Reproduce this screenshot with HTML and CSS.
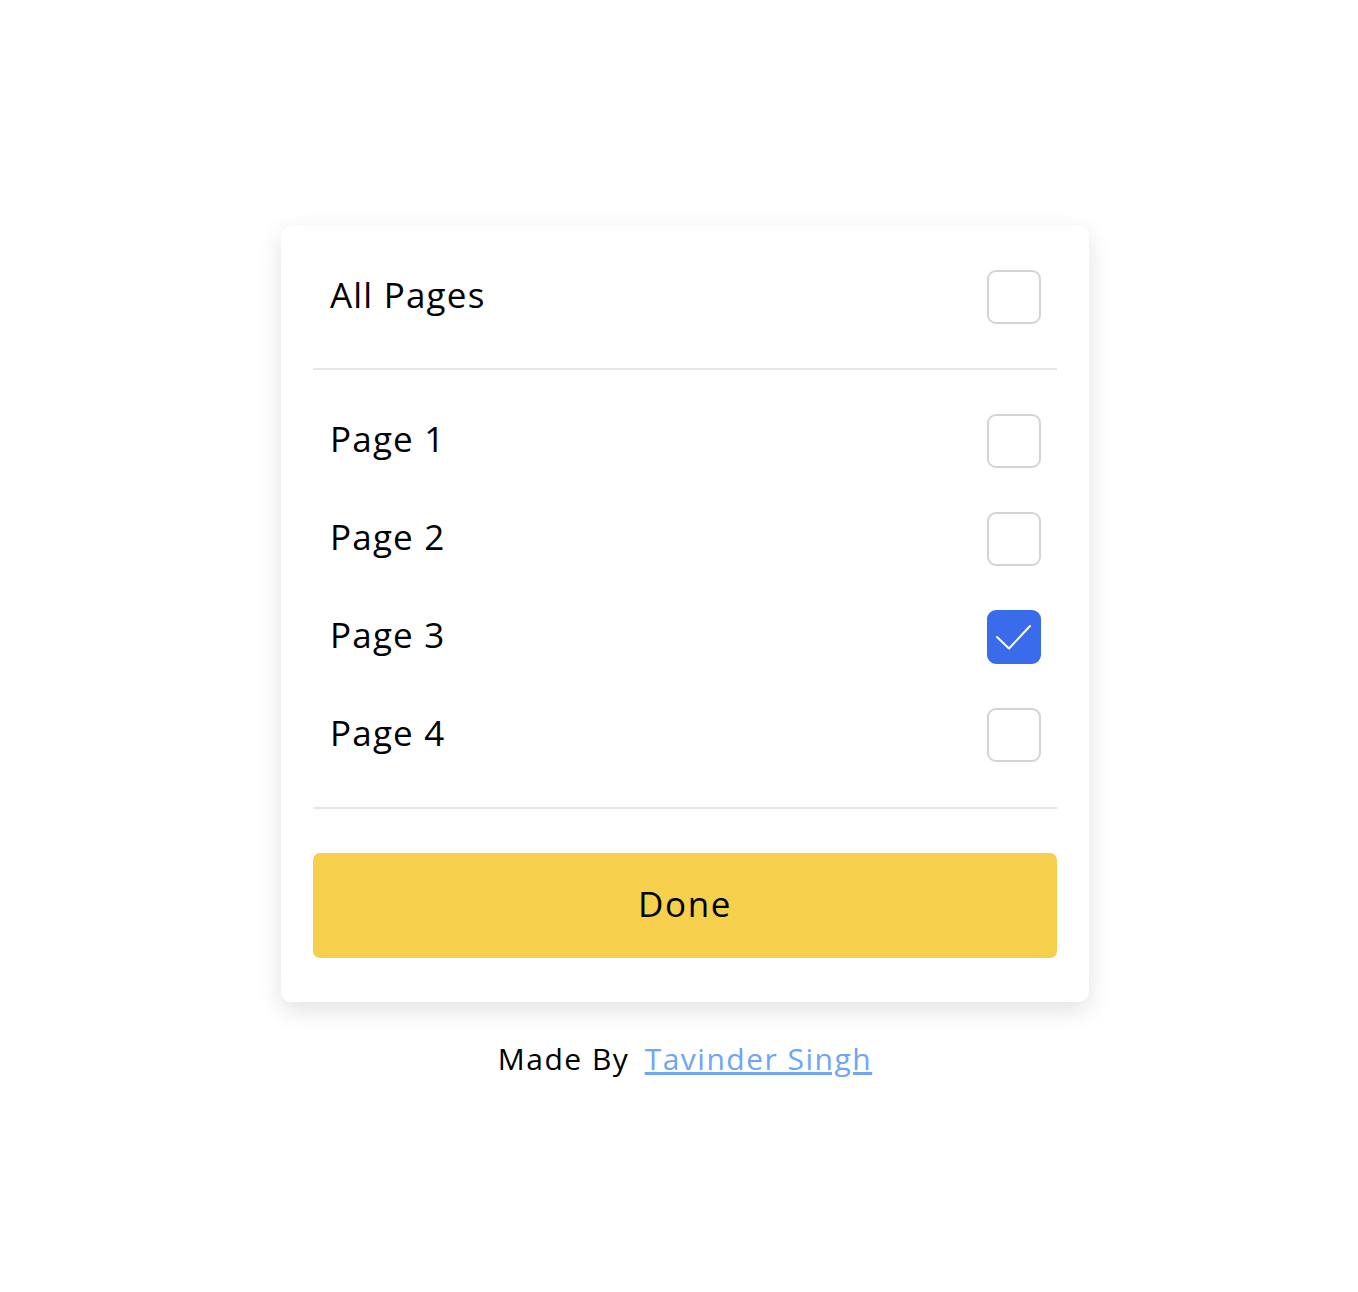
FILE: index.html
```html
<!DOCTYPE html>
<html>
<head>
<meta charset="utf-8">
<link rel="stylesheet" href="styles.css">
</head>
<body>
<main class="page">
  <section class="card">
    <div class="row row-all">
      <span class="label">All Pages</span>
      <span class="box"></span>
    </div>
    <hr class="divider">
    <div class="list">
      <div class="row"><span class="label">Page 1</span><span class="box"></span></div>
      <div class="row"><span class="label">Page 2</span><span class="box"></span></div>
      <div class="row"><span class="label">Page 3</span><span class="box checked"><svg viewBox="0 0 54 54" width="54" height="54"><path d="M10 27 L22 38.5 L43 16" fill="none" stroke="#fff" stroke-width="2" stroke-linecap="round" stroke-linejoin="round"/></svg></span></div>
      <div class="row"><span class="label">Page 4</span><span class="box"></span></div>
    </div>
    <hr class="divider divider-end">
    <button class="done">Done</button>
  </section>
  <p class="credit">Made By <a href="#">Tavinder Singh</a></p>
</main>
</body>
</html>
```
FILE: styles.css
```css
html, body {
  margin: 0;
  padding: 0;
  background: #fff;
}
body {
  font-family: "Open Sans", "Liberation Sans", sans-serif;
  color: #000;
}
.page {
  display: flex;
  flex-direction: column;
  align-items: center;
  padding-top: 226px;
  padding-left: 12px;
}
.card {
  width: 808px;
  box-sizing: border-box;
  padding: 22px 32px 44px;
  background: #fff;
  border-radius: 10px;
  box-shadow: 0 8px 24px rgba(0, 0, 0, 0.12);
}
.row {
  display: flex;
  align-items: center;
  justify-content: space-between;
  height: 98px;
  padding: 0 16px 0 17px;
}
.label {
  font-size: 35px;
  letter-spacing: 1.2px;
  padding-bottom: 6px;
}
.box {
  width: 54px;
  height: 54px;
  box-sizing: border-box;
  border: 2px solid #d4d4d4;
  border-radius: 9px;
  display: block;
}
.box.checked {
  background: #3a6bea;
  border-color: #3a6bea;
  position: relative;
}
.box.checked svg {
  position: absolute;
  left: -2px;
  top: -2px;
}
.divider {
  border: 0;
  height: 2px;
  background: #e6e6e8;
  margin: 22px 0;
}
.divider-end {
  margin: 23px 0 44px;
}
.done {
  display: block;
  width: 100%;
  height: 105px;
  border: 0;
  border-radius: 7px;
  background: #f6cf4d;
  font-family: inherit;
  font-size: 35px;
  color: #000;
  letter-spacing: 1.6px;
  padding: 0 0 4px;
}
.credit {
  margin: 36px 0 0;
  font-size: 30px;
  letter-spacing: 1.5px;
}
.credit a {
  color: #6fa5f4;
  margin-left: 6px;
}
```
